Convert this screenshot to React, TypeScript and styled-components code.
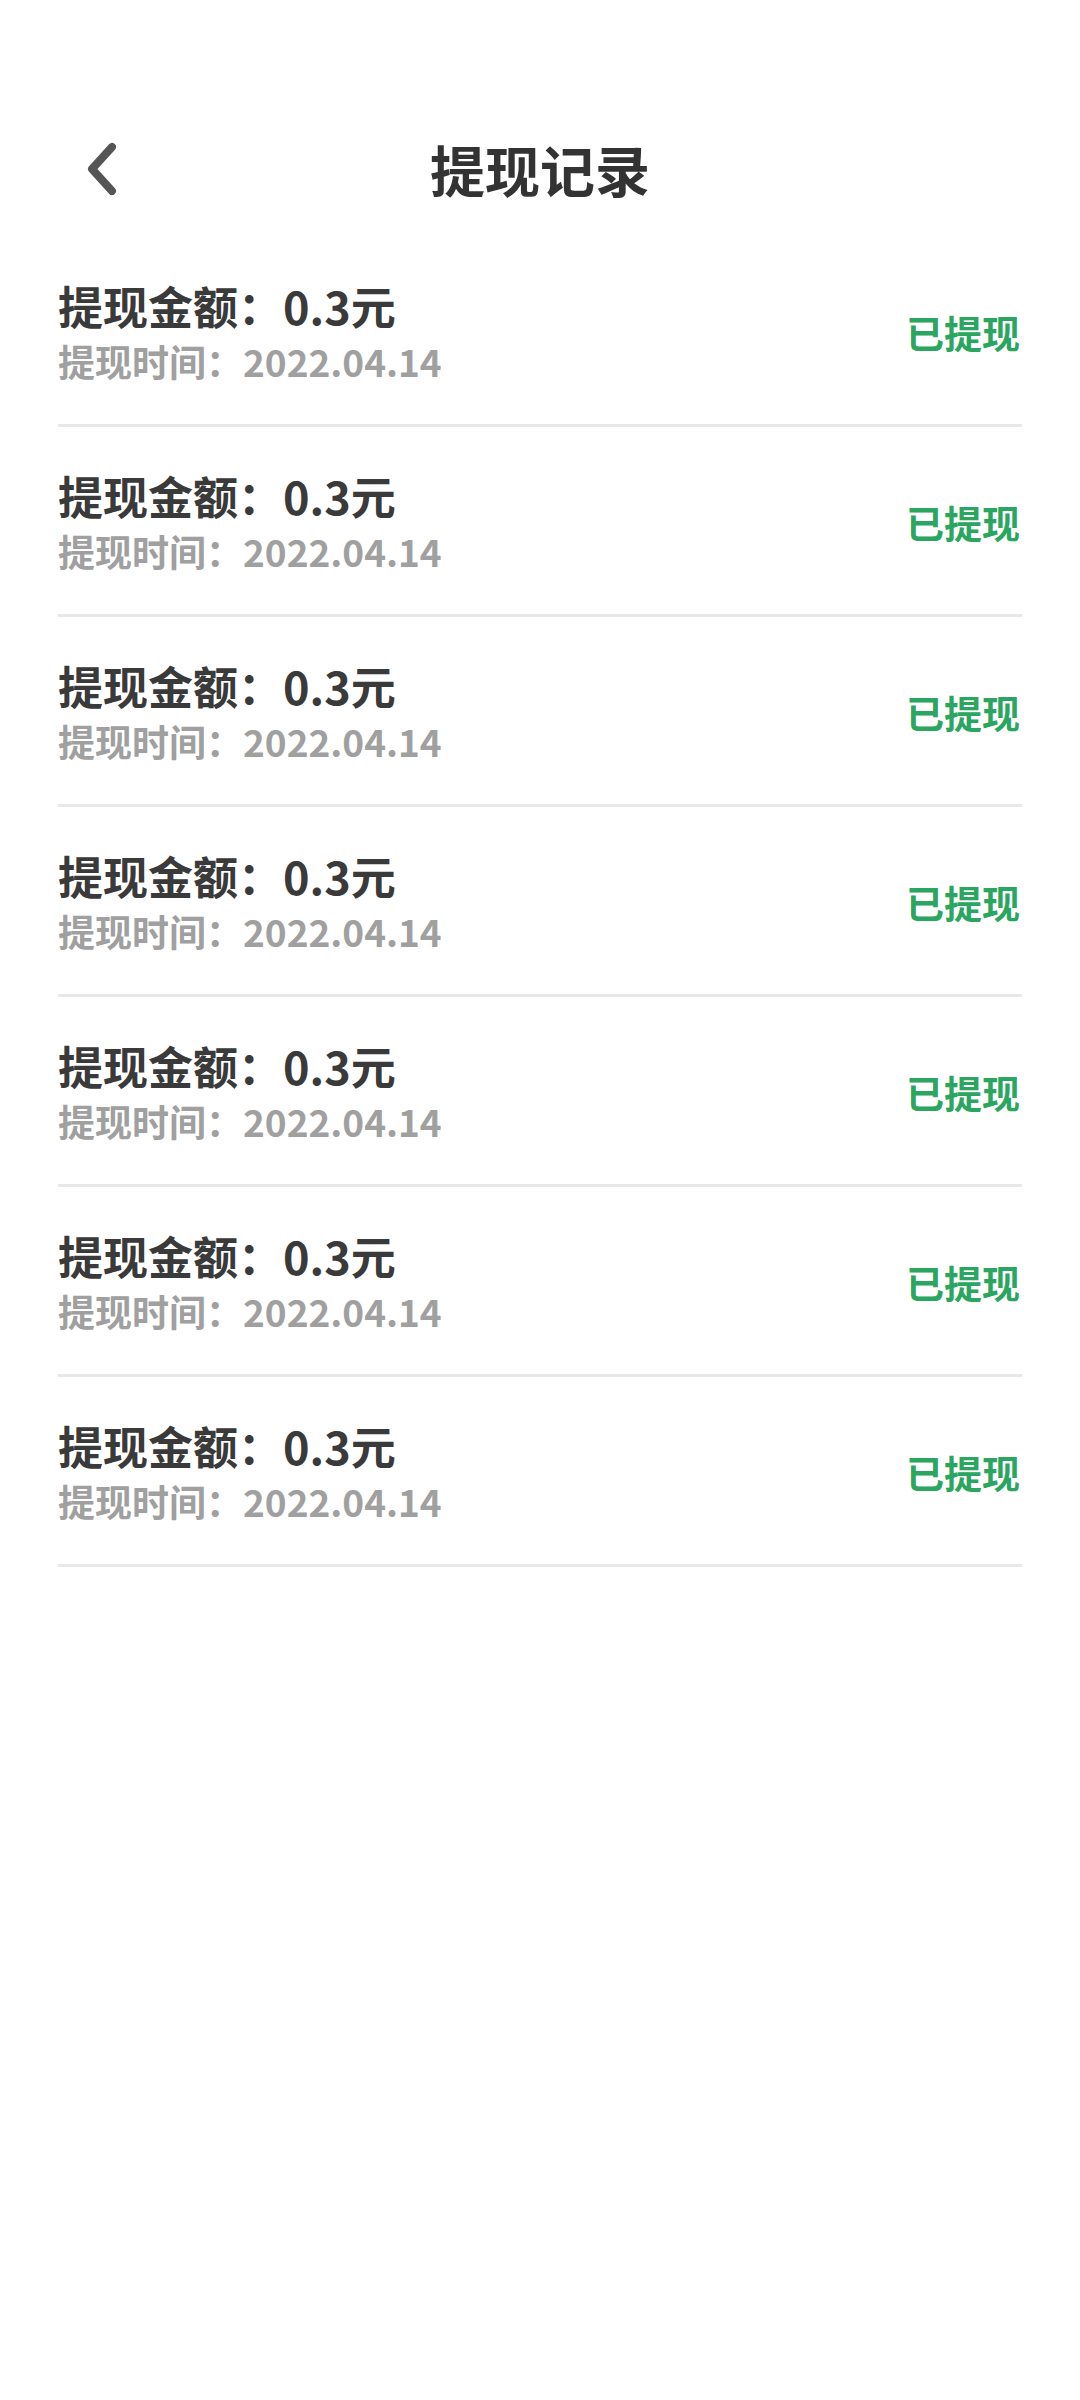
import styled, { createGlobalStyle } from "styled-components";

const records = Array.from({ length: 7 }, () => ({
  amount: "0.3元",
  date: "2022.04.14",
  status: "已提现",
}));

export default function App() {
  return (
    <>
      <GlobalStyle />
      <Page>
        <Header>
          <BackButton aria-label="返回">
            <svg width="40" height="56" viewBox="0 0 40 56">
              <path
                d="M28 6 L8 28 L28 50"
                fill="none"
                stroke="#555555"
                strokeWidth="8"
                strokeLinecap="round"
                strokeLinejoin="round"
              />
            </svg>
          </BackButton>
          <Title>提现记录</Title>
        </Header>
        <List>
          {records.map((item, i) => (
            <Row key={i}>
              <Info>
                <Amount>提现金额：{item.amount}</Amount>
                <DateText>提现时间：{item.date}</DateText>
              </Info>
              <Status>{item.status}</Status>
            </Row>
          ))}
        </List>
      </Page>
    </>
  );
}

const GlobalStyle = createGlobalStyle`
  body {
    margin: 0;
    background: #ffffff;
    font-family: "Noto Sans CJK SC", "Noto Sans", sans-serif;
  }
`;

const Page = styled.div`
  width: 1080px;
  min-height: 2400px;
  background: #ffffff;
  padding-top: 100px;
  box-sizing: border-box;
`;

const Header = styled.div`
  position: relative;
  height: 137px;
  display: flex;
  align-items: center;
  justify-content: center;
`;

const BackButton = styled.div`
  position: absolute;
  left: 84px;
  top: 50%;
  transform: translateY(-50%);
  display: flex;
  align-items: center;
`;

const Title = styled.h1`
  margin: 0;
  font-size: 55px;
  font-weight: 700;
  color: #333333;
  line-height: 1;
`;

const List = styled.div`
  padding: 0 58px;
`;

const Row = styled.div`
  height: 190px;
  display: flex;
  align-items: center;
  justify-content: space-between;
  border-bottom: 3px solid #e8e8e8;
  box-sizing: border-box;
  padding-top: 2px;
`;

const Info = styled.div`
  display: flex;
  flex-direction: column;
`;

const Amount = styled.div`
  font-size: 45px;
  font-weight: 700;
  color: #3a3a3a;
  line-height: 52px;
`;

const DateText = styled.div`
  margin-top: 7px;
  font-size: 37px;
  font-weight: 700;
  color: #a0a0a0;
  line-height: 44px;
`;

const Status = styled.div`
  font-size: 38px;
  font-weight: 700;
  color: #2aa660;
  margin-right: 2px;
`;
